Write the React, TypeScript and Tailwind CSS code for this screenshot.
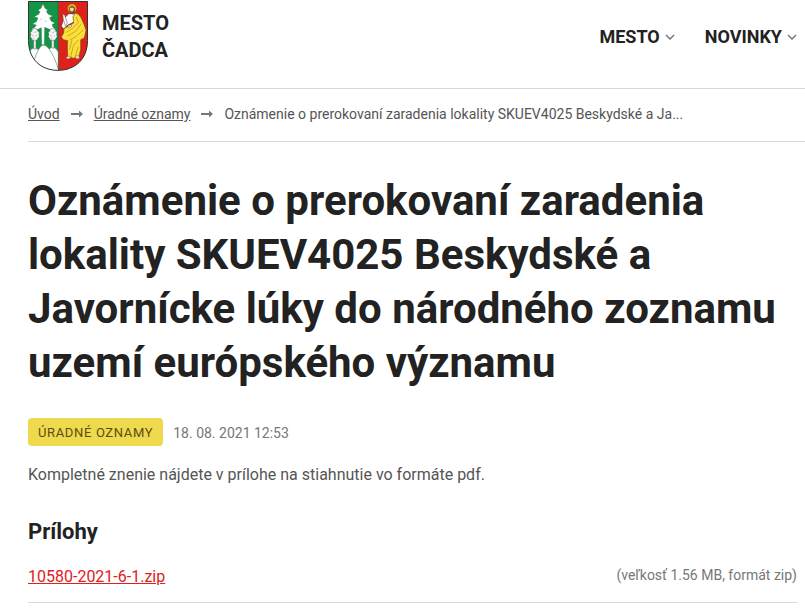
const navItems = [
  { href: '#mesto', label: 'Mesto' },
  { href: '#novinky', label: 'Novinky' },
];

const crumbs = [
  { href: '#uvod', label: 'Úvod' },
  { href: '#oznamy', label: 'Úradné oznamy' },
];

const attachments = [
  { href: '#10580-2021-6-1.zip', name: '10580-2021-6-1.zip', info: '(veľkosť 1.56 MB, formát zip)' },
];

function CoatOfArms() {
  return (
    <svg className="w-[60px] h-[70px] shrink-0" viewBox="0 0 180 210" aria-hidden="true">
      <defs>
        <clipPath id="shield">
          <path d="M1 1H179V118C179 176 140 208 90 208S1 176 1 118Z" />
        </clipPath>
      </defs>
      <g clipPath="url(#shield)">
        <rect width="91" height="210" fill="#149447" />
        <rect x="91" width="90" height="210" fill="#e0201b" />

        {/* hills */}
        <g fill="#fff" stroke="#4f8a64" strokeWidth="2">
          <path d="M0 158Q10 140 20 140Q31 141 37 156L30 210H0Z" />
          <path d="M58 152Q66 138 75 138Q84 140 92 154V210H64Z" />
          <path d="M8 210C20 172 32 133 46 132C62 132 80 168 93 210Z" />
        </g>

        {/* spruce */}
        <path
          d="M45 8L51 22L60 28L55 31L60 39L74 45L65 50L69 60L81 66L72 71L75 78L82 84L68 86L57 82L50 79L49 131H41L40 80L32 84L21 88L10 85L20 79L25 72L13 69L25 62L30 51L18 47L32 40L36 32L30 28L39 22Z"
          fill="#fff"
          stroke="#175e35"
          strokeLinejoin="round"
        />
        <path d="M41 53L35 58M50 58L57 63" fill="none" stroke="#8ebc9d" strokeWidth="2" />

        {/* side trees */}
        <g fill="#f7f7f7" stroke="#556b5c" strokeWidth="1.5">
          <path d="M17 115H24V144H17ZM71 114H78V141H71Z" />
          <path d="M20 82Q28 82 29 90Q36 94 33 101Q36 107 30 112Q28 120 20 118Q11 120 10 111Q4 106 9 101Q5 94 11 91Q12 82 20 82Z" />
          <path d="M74 82Q82 82 83 90Q89 94 86 101Q90 107 84 112Q82 120 74 118Q65 120 64 111Q58 106 63 101Q59 94 65 91Q66 82 74 82Z" />
        </g>
        <path
          d="M15 92L18 95M24 90L21 96M12 103L17 104M27 102L22 106M14 111L18 112M70 92L73 95M79 91L75 97M67 104L72 105M81 103L77 107M69 112L73 112"
          stroke="#999"
          strokeWidth="2"
        />

        {/* saint */}
        <path d="M122 38L107 54L100 76L107 84L120 72L132 66L147 59L150 38Z" fill="#fff" stroke="#542c24" strokeWidth="2" />
        <circle cx="132" cy="22" r="14" fill="#e8a91c" stroke="#8e4f12" strokeWidth="2" />
        <path d="M123 20Q132 10 141 20L141 32L134 41L125 34Z" fill="#7e4a27" />
        <path d="M126 20H137V28L132 32L126 28Z" fill="#f4d4b5" />
        <path
          d="M142 36Q156 39 161 54L169 72L174 88L169 111L158 116L158 145L153 166L136 172L119 166L118 138L119 119L106 116L100 108L107 96L108 83L122 74L137 66L135 47Z"
          fill="#fbdf3b"
          stroke="#69501a"
          strokeWidth="2"
        />
        <path
          d="M145 48L151 64L134 82L115 94M160 68L143 91L118 106M166 86L145 106L125 117M151 117L136 134L129 164M151 137L142 166M132 116L125 145"
          fill="none"
          stroke="#b88b1c"
          strokeWidth="2"
        />
        <path d="M104 38L110 43L118 66L113 76L106 56Z" fill="#fff" stroke="#5b4940" strokeWidth="1.5" />
        <path d="M121 73L131 72L130 78L120 81ZM120 165L113 171L121 174L131 168ZM142 165L144 174L155 172L152 164Z" fill="#f8dfc8" stroke="#68402a" />
      </g>
      <path d="M91 1V208" stroke="#333" strokeWidth="2" />
      <path d="M1.5 1.5H178.5V118C178.5 176 140 208 90 208S1.5 176 1.5 118Z" fill="none" stroke="#333" strokeWidth="3" />
    </svg>
  );
}

function Arrow() {
  return (
    <svg className="w-3 h-2 mx-[11px] shrink-0 text-[#777]" viewBox="0 0 12 8" fill="currentColor" aria-hidden="true">
      <path d="M0 3H8V0.5L12 4L8 7.5V5H0Z" />
    </svg>
  );
}

function Chevron() {
  return (
    <svg className="w-[10px] h-1.5 shrink-0 text-[#777]" viewBox="0 0 10 6" fill="none" stroke="currentColor" strokeWidth="1.5" aria-hidden="true">
      <path d="M1 1L5 5L9 1" />
    </svg>
  );
}

export default function App() {
  return (
    <div className="bg-white text-[#555] font-['Roboto',sans-serif] overflow-x-hidden">
      <header className="flex justify-between border-b border-[#d9d9d9] pt-px pb-[17px] pl-7 pr-2">
        <a href="#uvod" className="flex items-start gap-[14px] text-[#222]">
          <CoatOfArms />
          <span className="pt-[9px] text-xl leading-[27px] font-bold uppercase">
            Mesto<br />Čadca
          </span>
        </a>
        <nav className="flex items-center gap-[30px] pt-0.5">
          {navItems.map(item => (
            <a key={item.href} href={item.href} className="flex items-center gap-[5px] text-lg font-bold uppercase text-[#222]">
              {item.label}
              <Chevron />
            </a>
          ))}
        </nav>
      </header>

      <main className="pl-7">
        <nav aria-label="Breadcrumb" className="flex items-center border-b border-[#d9d9d9] pt-[15px] pb-[17px] text-sm whitespace-nowrap">
          {crumbs.map(crumb => (
            <span key={crumb.href} className="flex items-center">
              <a href={crumb.href} className="underline">{crumb.label}</a>
              <Arrow />
            </span>
          ))}
          <span>Oznámenie o prerokovaní zaradenia lokality SKUEV4025 Beskydské a Ja...</span>
        </nav>

        <article className="pr-2">
          <h1 className="pt-8 text-[42px] leading-[54px] font-bold text-[#222]">
            Oznámenie o prerokovaní zaradenia lokality SKUEV4025 Beskydské a Javornícke lúky do národného zoznamu uzemí európského významu
          </h1>

          <div className="mt-7 flex items-center gap-[10px]">
            <a href="#oznamy" className="rounded bg-[#efd94f] px-[10px] pt-[5px] pb-[3px] text-[13px] leading-5 tracking-wider uppercase text-[#5c4f0c]">
              Úradné oznamy
            </a>
            <time dateTime="2021-08-18T12:53" className="pt-0.5 text-sm text-[#777]">18. 08. 2021 12:53</time>
          </div>

          <p className="mt-[17px] text-base">Kompletné znenie nájdete v prílohe na stiahnutie vo formáte pdf.</p>

          <h2 className="mt-[31px] text-[22px] leading-7 font-bold text-[#222]">Prílohy</h2>
          <ul className="mt-4">
            {attachments.map(file => (
              <li key={file.name} className="flex items-start justify-between border-b border-[#d9d9d9] pt-[3px] pb-[13px]">
                <a href={file.href} className="text-base text-[#e02020] underline">{file.name}</a>
                <span className="text-sm text-[#777]">{file.info}</span>
              </li>
            ))}
          </ul>
        </article>
      </main>
    </div>
  );
}
